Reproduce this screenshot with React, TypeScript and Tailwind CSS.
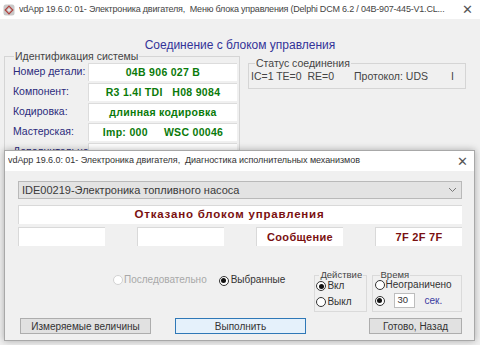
import React from "react";

const F = { fontFamily: '"Liberation Sans", Arial, sans-serif' };

function Radio({ checked, disabled }: { checked?: boolean; disabled?: boolean }) {
  return (
    <span
      className={`inline-flex items-center justify-center w-[10px] h-[10px] rounded-full border bg-white shrink-0 ${
        disabled ? "border-[#d2d2d2]" : "border-[#333]"
      }`}
    >
      {checked && <span className="w-[5px] h-[5px] rounded-full bg-[#111]" />}
    </span>
  );
}

function Field({ children }: { children?: React.ReactNode }) {
  return (
    <div className="h-[18px] bg-white border-t border-l border-[#dcdcdc] flex items-center justify-center text-[10.5px] font-bold text-[#0a7a0a] tracking-[0.3px] whitespace-pre">
      {children}
    </div>
  );
}

export default function App() {
  const rows: [string, string][] = [
    ["Номер детали:", "04B 906 027 B"],
    ["Компонент:", "R3 1.4l TDI   H08 9084"],
    ["Кодировка:", "длинная кодировка"],
    ["Мастерская:", "Imp: 000     WSC 00046"],
    ["Дополнительно:", ""],
  ];
  return (
    <div className="relative w-[480px] h-[345px] overflow-hidden bg-[#f0f0f0] text-[#222]" style={F}>
      {/* Main window title bar */}
      <div className="h-[19px] bg-white flex items-center pl-[3px] pr-[7px] text-[9px] tracking-[-0.2px] text-[#444]">
        <svg width="12" height="12" viewBox="0 0 12 12" className="shrink-0">
          <rect x="0.5" y="0.5" width="11" height="11" rx="2.5" fill="#c9c9c9" />
          <path d="M6 2.2 L9.8 6 L6 9.8 L2.2 6 Z" fill="none" stroke="#b0413e" strokeWidth="1.2" />
          <circle cx="6" cy="6" r="1.3" fill="#e8e8e8" />
        </svg>
        <span className="ml-[4px] whitespace-nowrap overflow-hidden flex-1">
          vdApp 19.6.0: 01- Электроника двигателя,&nbsp; Меню блока управления (Delphi DCM 6.2 / 04B-907-445-V1.CL...
        </span>
        <span className="text-[13px] text-[#555] leading-none ml-[6px]">✕</span>
      </div>

      {/* Heading */}
      <div className="pt-[18px] leading-[17px] text-center text-[12px] text-[#333399]">
        Соединение с блоком управления
      </div>

      <div className="-mt-[4px] flex items-start pl-[4px] gap-[8px]">
        <fieldset className="w-[236px] border border-[#d5d5d5] pl-[8px] pr-[2px] pt-[1px] pb-[8px]">
          <legend className="ml-[1px] px-[1px] text-[10.5px] text-[#444] leading-[12px]">Идентификация системы</legend>
          <div className="flex flex-col gap-[2px]">
            {rows.map(([l, v]) => (
              <div key={l} className="flex items-center">
                <div className="w-[75px] text-[10.5px] text-[#2b2b7c] whitespace-nowrap overflow-hidden">{l}</div>
                <div className="flex-1">
                  <Field>{v}</Field>
                </div>
              </div>
            ))}
          </div>
        </fieldset>
        <fieldset className="w-[218px] border border-[#d5d5d5] px-[2px] pb-[3px] mt-[7px]">
          <legend className="ml-[4px] px-[1px] text-[10.5px] text-[#444] leading-[12px]">Статус соединения</legend>
          <div className="flex items-center text-[10.5px] text-[#444] whitespace-pre">
            <span className="w-[103px]">IC=1 TE=0  RE=0</span>
            <span className="w-[97px]">Протокол: UDS</span>
            <span>I</span>
          </div>
        </fieldset>
      </div>

      {/* Dialog */}
      <div className="absolute left-[4px] top-[150px] w-[471px] h-[191px] border border-[#a8a8a8] bg-[#f0f0f0] shadow-[0_0_7px_rgba(0,0,0,0.3)] flex flex-col">
        <div className="h-[20px] bg-white flex items-center pl-[3px] pr-[6px] text-[9px] tracking-[-0.05px] text-[#333] shrink-0">
          <span className="flex-1 whitespace-nowrap overflow-hidden">
            vdApp 19.6.0: 01- Электроника двигателя,&nbsp; Диагностика исполнительных механизмов
          </span>
          <span className="text-[13px] text-[#555] leading-none">✕</span>
        </div>
        <div className="flex flex-col pl-[13px] pr-[12px] pt-[10px]">
          <div className="h-[18px] bg-[#e3e3e3] border border-[#b9b9b9] flex items-center pl-[3px] pr-[4px] text-[11px] text-[#3a3a3a]">
            <span className="flex-1">IDE00219-Электроника топливного насоса</span>
            <svg width="9" height="6" viewBox="0 0 9 6">
              <path d="M1 1 L4.5 4.5 L8 1" fill="none" stroke="#777" strokeWidth="1" />
            </svg>
          </div>
          <div className="mt-[6px] h-[19px] bg-white border-t border-l border-[#d9d9d9] flex items-center justify-center pr-[22px] text-[11.5px] font-bold text-[#7a1010] tracking-[0.8px]">
            Отказано блоком управления
          </div>
          <div className="mt-[3px] flex gap-[32px]">
            {["", "", "Сообщение", "7F 2F 7F"].map((t, i) => (
              <div
                key={i}
                className="w-[87px] h-[19px] bg-white border-t border-l border-[#d9d9d9] flex items-center justify-center text-[11px] font-bold text-[#7a1010] tracking-[0.3px]"
              >
                {t}
              </div>
            ))}
          </div>
          <div className="mt-[23px] h-[44px] flex items-start">
            <div className="w-[300px] flex items-center pt-[5px] pl-[95px] text-[10px] leading-[12px]">
              <Radio disabled />
              <span className="ml-[1px] text-[#a8a8a8]">Последовательно</span>
              <span className="ml-[12px]"><Radio checked /></span>
              <span className="ml-[2px] text-[#333]">Выбранные</span>
            </div>
            <fieldset className="w-[53px] h-[43px] border border-[#dadada] pl-[1px]">
              <legend className="ml-[3px] px-[1px] text-[9.5px] text-[#444] leading-[12px]">Действие</legend>
              <div className="flex flex-col text-[10px] text-[#333] leading-[16px] -mt-[3px]">
                <div className="flex items-center gap-[1px]"><Radio checked />Вкл</div>
                <div className="flex items-center gap-[1px]"><Radio />Выкл</div>
              </div>
            </fieldset>
            <fieldset className="ml-[5px] w-[92px] h-[43px] border border-[#dadada] pl-[2px]">
              <legend className="ml-[5px] px-[1px] text-[9.5px] text-[#444] leading-[12px]">Время</legend>
              <div className="flex flex-col text-[10px] text-[#333] -mt-[3px]">
                <div className="flex items-center gap-[1px] leading-[14px]"><Radio />Неограничено</div>
                <div className="flex items-center mt-[1px]">
                  <Radio checked />
                  <div className="ml-[9px] w-[21px] h-[15px] bg-white border border-[#bdbdbd] flex items-center pl-[3px] text-[9.5px]">30</div>
                  <span className="ml-[10px] text-[#3a3aa0]">сек.</span>
                </div>
              </div>
            </fieldset>
          </div>
          <div className="mt-[5px] flex items-center text-[10px] text-[#333]">
            <div className="ml-[2px] w-[131px] h-[16px] bg-[#e1e1e1] border border-[#adadad] flex items-center justify-center">
              Измеряемые величины
            </div>
            <div className="ml-[24px] w-[131px] h-[16px] bg-[#e5f1fb] border border-[#2f78b7] flex items-center justify-center">
              Выполнить
            </div>
            <div className="ml-auto w-[93px] h-[16px] bg-[#e1e1e1] border border-[#adadad] flex items-center justify-center">
              Готово, Назад
            </div>
          </div>
        </div>
      </div>
    </div>
  );
}
